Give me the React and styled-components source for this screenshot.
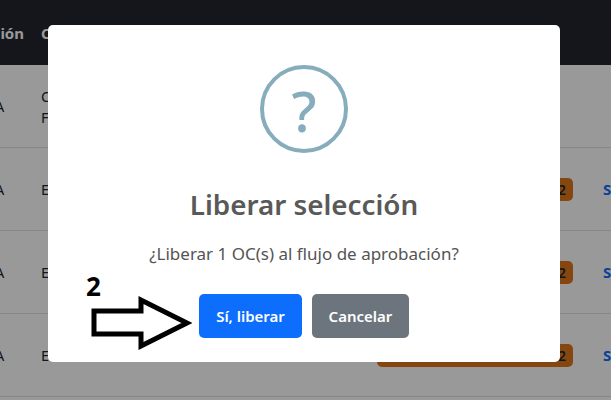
import React from "react";
import styled, { createGlobalStyle } from "styled-components";

const Global = createGlobalStyle`
  html, body { margin: 0; padding: 0; height: 100%; overflow: hidden; background: #fff; }
  body { font-family: "Noto Sans", "Open Sans", "Liberation Sans", sans-serif; color: #212529; }
`;
const Page = styled.div`
  width: 611px;
  height: 400px;
  overflow: hidden;
`;
const Table = styled.div`
  display: flex;
  flex-direction: column;
  margin-left: -8px;
  width: 619px;
`;
const HeadRow = styled.div`
  display: flex;
  align-items: center;
  height: 65px;
  background: #23262e;
  color: #fff;
  font-size: 15px;
  font-weight: 700;
`;
const HeadFirst = styled.div`
  width: 49px;
  padding-right: 17px;
  box-sizing: border-box;
  text-align: right;
`;
const Row = styled.div`
  display: flex;
  align-items: center;
  height: 82px;
  border-bottom: 1px solid #dee2e6;
  font-size: 14.5px;
  line-height: 21px;
`;
const StateCell = styled.div`
  width: 49px;
  padding-left: 3px;
  box-sizing: border-box;
`;
const TypeCell = styled.div`
  flex: 1;
  padding-top: 1px;
`;
const Badge = styled.span`
  width: ${(p) => p.$width}px;
  height: 23px;
  box-sizing: border-box;
  padding-right: 7px;
  border-radius: 5px;
  background: #e0761a;
  text-align: right;
  font-weight: 600;
  line-height: 23px;
`;
const LinkCell = styled.div`
  width: 38px;
  padding-left: 30px;
  box-sizing: border-box;
  overflow: hidden;
  color: #0d6efd;
  font-weight: 700;
  font-size: 15px;
  white-space: nowrap;
`;
const Overlay = styled.div`
  position: fixed;
  inset: 0;
  background: rgba(0, 0, 0, 0.4);
  padding: 25px 51px 38px 48px;
  box-sizing: border-box;
`;
const Modal = styled.div`
  position: relative;
  height: 337px;
  box-sizing: border-box;
  padding-top: 40px;
  background: #fff;
  border-radius: 5px;
  display: flex;
  flex-direction: column;
  align-items: center;
`;
const IconRing = styled.div`
  width: 88px;
  height: 88px;
  box-sizing: border-box;
  border: 4px solid #87adbd;
  border-radius: 50%;
  color: #87adbd;
  font-size: 56px;
  font-weight: 500;
  line-height: 83px;
  text-align: center;
`;
const Title = styled.h2`
  margin: 32px 0 0;
  color: #595959;
  font-size: 27.8px;
  line-height: 38px;
  font-weight: 600;
`;
const Message = styled.p`
  margin: 19px 0 0;
  color: #545454;
  font-size: 17px;
  line-height: 24px;
`;
const Actions = styled.div`
  display: flex;
  gap: 10px;
  margin-top: 28px;
`;
const Button = styled.button`
  height: 44px;
  width: ${(p) => p.$width}px;
  padding: 0;
  border: 0;
  border-radius: 5px;
  background: ${(p) => p.$bg};
  color: #fff;
  font-family: inherit;
  font-size: 15px;
  font-weight: 600;
`;
const StepNumber = styled.span`
  position: absolute;
  left: 38px;
  top: 245px;
  color: #000;
  font-size: 26px;
  line-height: 32px;
  font-weight: 700;
`;
const Arrow = styled.svg`
  position: absolute;
  left: 40px;
  top: 269px;
`;

const rows = [
  { id: 1, lines: ["Compra", "Factura"] },
  { id: 2, lines: ["Emitida"], badge: 60 },
  { id: 3, lines: ["Emitida"], badge: 60 },
  { id: 4, lines: ["Emitida"], badge: 196 },
];

export default function App() {
  return (
    <Page>
      <Global />
      <Table>
        <HeadRow>
          <HeadFirst>ión</HeadFirst>
          <span>Cuenta</span>
        </HeadRow>
        {rows.map((r) => (
          <Row key={r.id}>
            <StateCell>A</StateCell>
            <TypeCell>
              {r.lines.map((l) => (
                <div key={l}>{l}</div>
              ))}
            </TypeCell>
            {r.badge && <Badge $width={r.badge}>2</Badge>}
            <LinkCell>{r.badge ? "Sí" : ""}</LinkCell>
          </Row>
        ))}
      </Table>
      <Overlay>
        <Modal>
          <IconRing>?</IconRing>
          <Title>Liberar selección</Title>
          <Message>¿Liberar 1 OC(s) al flujo de aprobación?</Message>
          <Actions>
            <Button $width={103} $bg="#0d6efd">Sí, liberar</Button>
            <Button $width={97} $bg="#6c757d">Cancelar</Button>
          </Actions>
          <StepNumber>2</StepNumber>
          <Arrow width="104" height="56" viewBox="0 0 104 56">
            <path
              d="M6 17H53V6L99 29L53 52V40H6Z"
              fill="#fff"
              stroke="#000"
              strokeWidth="5"
            />
          </Arrow>
        </Modal>
      </Overlay>
    </Page>
  );
}
